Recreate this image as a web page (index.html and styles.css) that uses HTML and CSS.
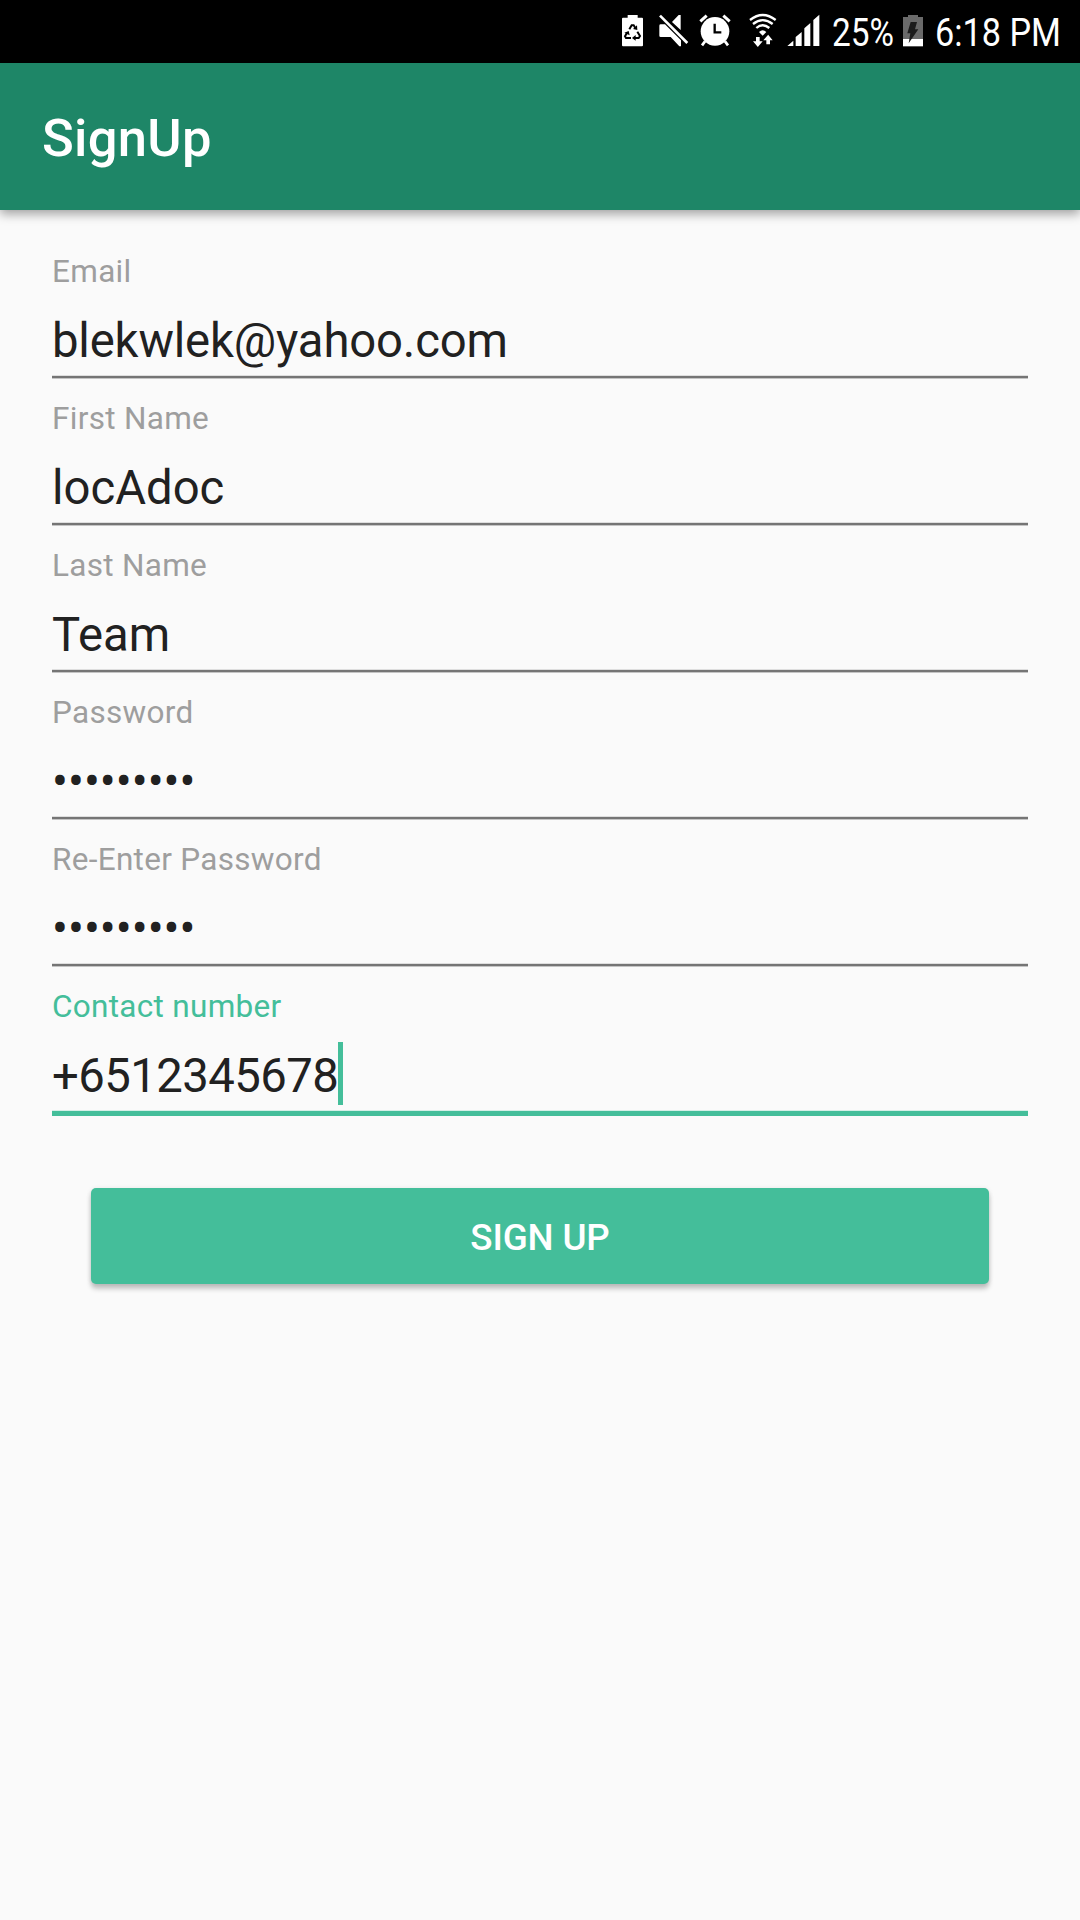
FILE: index.html
```html
<!DOCTYPE html>
<html lang="en">
<head>
<meta charset="utf-8">
<title>SignUp</title>
<link rel="stylesheet" href="styles.css">
</head>
<body>
<header class="status">
  <svg class="recycle" width="21" height="34" viewBox="36 39 63 102" fill="#fff">
    <path d="M36 56q0-3 3-3h14v-8h30v8h13q3 0 3 3v80q0 3-3 3H39q-3 0-3-3z"/>
    <g fill="none" stroke="#000" stroke-width="6">
      <path d="M58 88L65 76H71L76 84"/>
      <path d="M82 95L90 108L86 114H75"/>
      <path d="M63 114H48L45 109L51 98"/>
    </g>
    <path fill="#000" d="M69 87L82 90 81 76zM77 105V122L66 114zM43 98L56 93 59 106z"/>
  </svg>
  <svg class="mute" width="30" height="34" viewBox="146 39 90 102" fill="#fff">
    <path d="M147 77q0-4 4-4H164L212 121V139H207L181 111H151q-4 0-4-4zM185 66L205 45h6V90z"/>
    <path d="M149 47L231 129" stroke="#fff" stroke-width="8"/>
  </svg>
  <svg class="alarm" width="32" height="34" viewBox="267 39 96 102" fill="#fff">
    <circle cx="315" cy="94" r="43"/>
    <path d="M271 64L290 47M359 64L340 47" stroke="#fff" stroke-width="9"/>
    <path d="M285 124L276 136M345 124L354 136" stroke="#fff" stroke-width="8"/>
    <path d="M314 71V97H334" fill="none" stroke="#000" stroke-width="7"/>
  </svg>
  <svg class="wifi" width="28" height="34" viewBox="416 39 84 102" fill="#fff">
    <g fill="none" stroke="#fff" stroke-width="7">
      <path d="M419 60Q457 30 496 60"/>
      <path d="M428 72Q457 49 487 72"/>
      <path d="M438 84Q457 67 477 84"/>
    </g>
    <path d="M446 96Q457 86 468 96L457 107zM437 111h11v13h9L442.500 141 428 124h9zM468 133h11V121h8L473.500 104 459 121h9z"/>
  </svg>
  <svg class="signal" width="33" height="34" viewBox="530 39 99 102" fill="#fff">
    <path d="M531 138L549 122V138zM556 138V111L574 96V138zM582 138V85L600 69V138zM609 138V60L627 44V138z"/>
  </svg>
  <svg class="percent" width="61" height="34" viewBox="0 13 61 34">
    <text class="status-text" x="-1" y="46" textLength="62" lengthAdjust="spacingAndGlyphs">25%</text>
  </svg>
  <svg class="battery" width="20" height="34" viewBox="249 39 60 102">
    <path fill="#6a6a6a" d="M249 51h15v-6h30v6h15v66h-60z"/>
    <path fill="#fff" d="M249 117h60v22h-60z"/>
    <path fill="#1c1c1c" d="M272 66h19l-6 22h10L266 130l5-30h-9z"/>
  </svg>
  <svg class="clock" width="126" height="34" viewBox="0 13 126 34">
    <text class="status-text" x="0" y="46" textLength="126" lengthAdjust="spacingAndGlyphs">6:18 PM</text>
  </svg>
</header>
<div class="appbar"><h1 class="title">SignUp</h1></div>
<main class="form">
  <div class="field"><div class="label">Email</div><div class="value email">blekwlek@yahoo.com</div><div class="line"></div></div>
  <div class="field"><div class="label">First Name</div><div class="value">locAdoc</div><div class="line"></div></div>
  <div class="field"><div class="label">Last Name</div><div class="value">Team</div><div class="line"></div></div>
  <div class="field"><div class="label">Password</div><div class="value">•••••••••</div><div class="line"></div></div>
  <div class="field"><div class="label">Re-Enter Password</div><div class="value">•••••••••</div><div class="line"></div></div>
  <div class="field focused"><div class="label">Contact number</div><div class="value phone">+6512345678<span class="caret"></span></div><div class="line"></div></div>
  <button class="submit" type="button">SIGN UP</button>
</main>
</body>
</html>
```
FILE: styles.css
```css
* { box-sizing: border-box; }
body {
  margin: 0;
  min-height: 1920px;
  background: #fafafa;
  color: #212121;
  font-family: Roboto, "Liberation Sans", sans-serif;
}
.status {
  display: flex;
  height: 63px;
  padding: 13px 0 0 622px;
  background: #000;
}
.status svg { flex: none; overflow: visible; }
.status-text { fill: #fff; font-size: 39px; }
.mute { margin-left: 16px; }
.alarm { margin-left: 10px; }
.wifi { margin-left: 18px; }
.signal { margin-left: 10px; }
.percent { margin-left: 13px; }
.battery { margin-left: 9px; }
.clock { margin-left: 12px; }
.appbar {
  display: flex;
  align-items: center;
  height: 147px;
  padding: 2px 42px 0;
  background: #1e8667;
  box-shadow: 0 4px 10px rgba(0, 0, 0, .36);
}
.title {
  margin: 0;
  color: #fff;
  font-size: 52.5px;
  font-weight: 500;
  letter-spacing: .3px;
  line-height: 62px;
}
.form { padding: 43px 52px 0; }
.field { margin-bottom: 21px; }
.label {
  height: 37px;
  color: #9e9e9e;
  font-size: 31.5px;
  letter-spacing: .3px;
  line-height: 37px;
}
.value {
  display: flex;
  height: 55px;
  margin: 24px 0 6px;
  font-size: 47.25px;
  line-height: 55px;
}
.email { letter-spacing: -.16px; }
.phone { letter-spacing: -.55px; }
.line {
  height: 4px;
  background: #757575;
  border-top: 1px solid #dedede;
  border-bottom: 1px solid #c4c4c4;
}
.focused { margin-bottom: 72px; }
.focused .label { color: #44be9a; }
.focused .line {
  height: 6px;
  background: #44be9a;
  border-top-color: #d5efe7;
  border-bottom: 0;
}
.caret {
  width: 5px;
  height: 63px;
  margin-top: -7px;
  background: #44be9a;
}
.submit {
  display: block;
  width: 898px;
  height: 96px;
  margin: 0 auto;
  padding: 2px 0 0;
  border: 0;
  border-radius: 5px;
  background: #44be9a;
  box-shadow: 0 5px 5px rgba(0, 0, 0, .2), 0 1px 5px rgba(0, 0, 0, .12);
  color: #fff;
  font-family: inherit;
  font-size: 36.75px;
  font-weight: 500;
  letter-spacing: -.15px;
}
```
